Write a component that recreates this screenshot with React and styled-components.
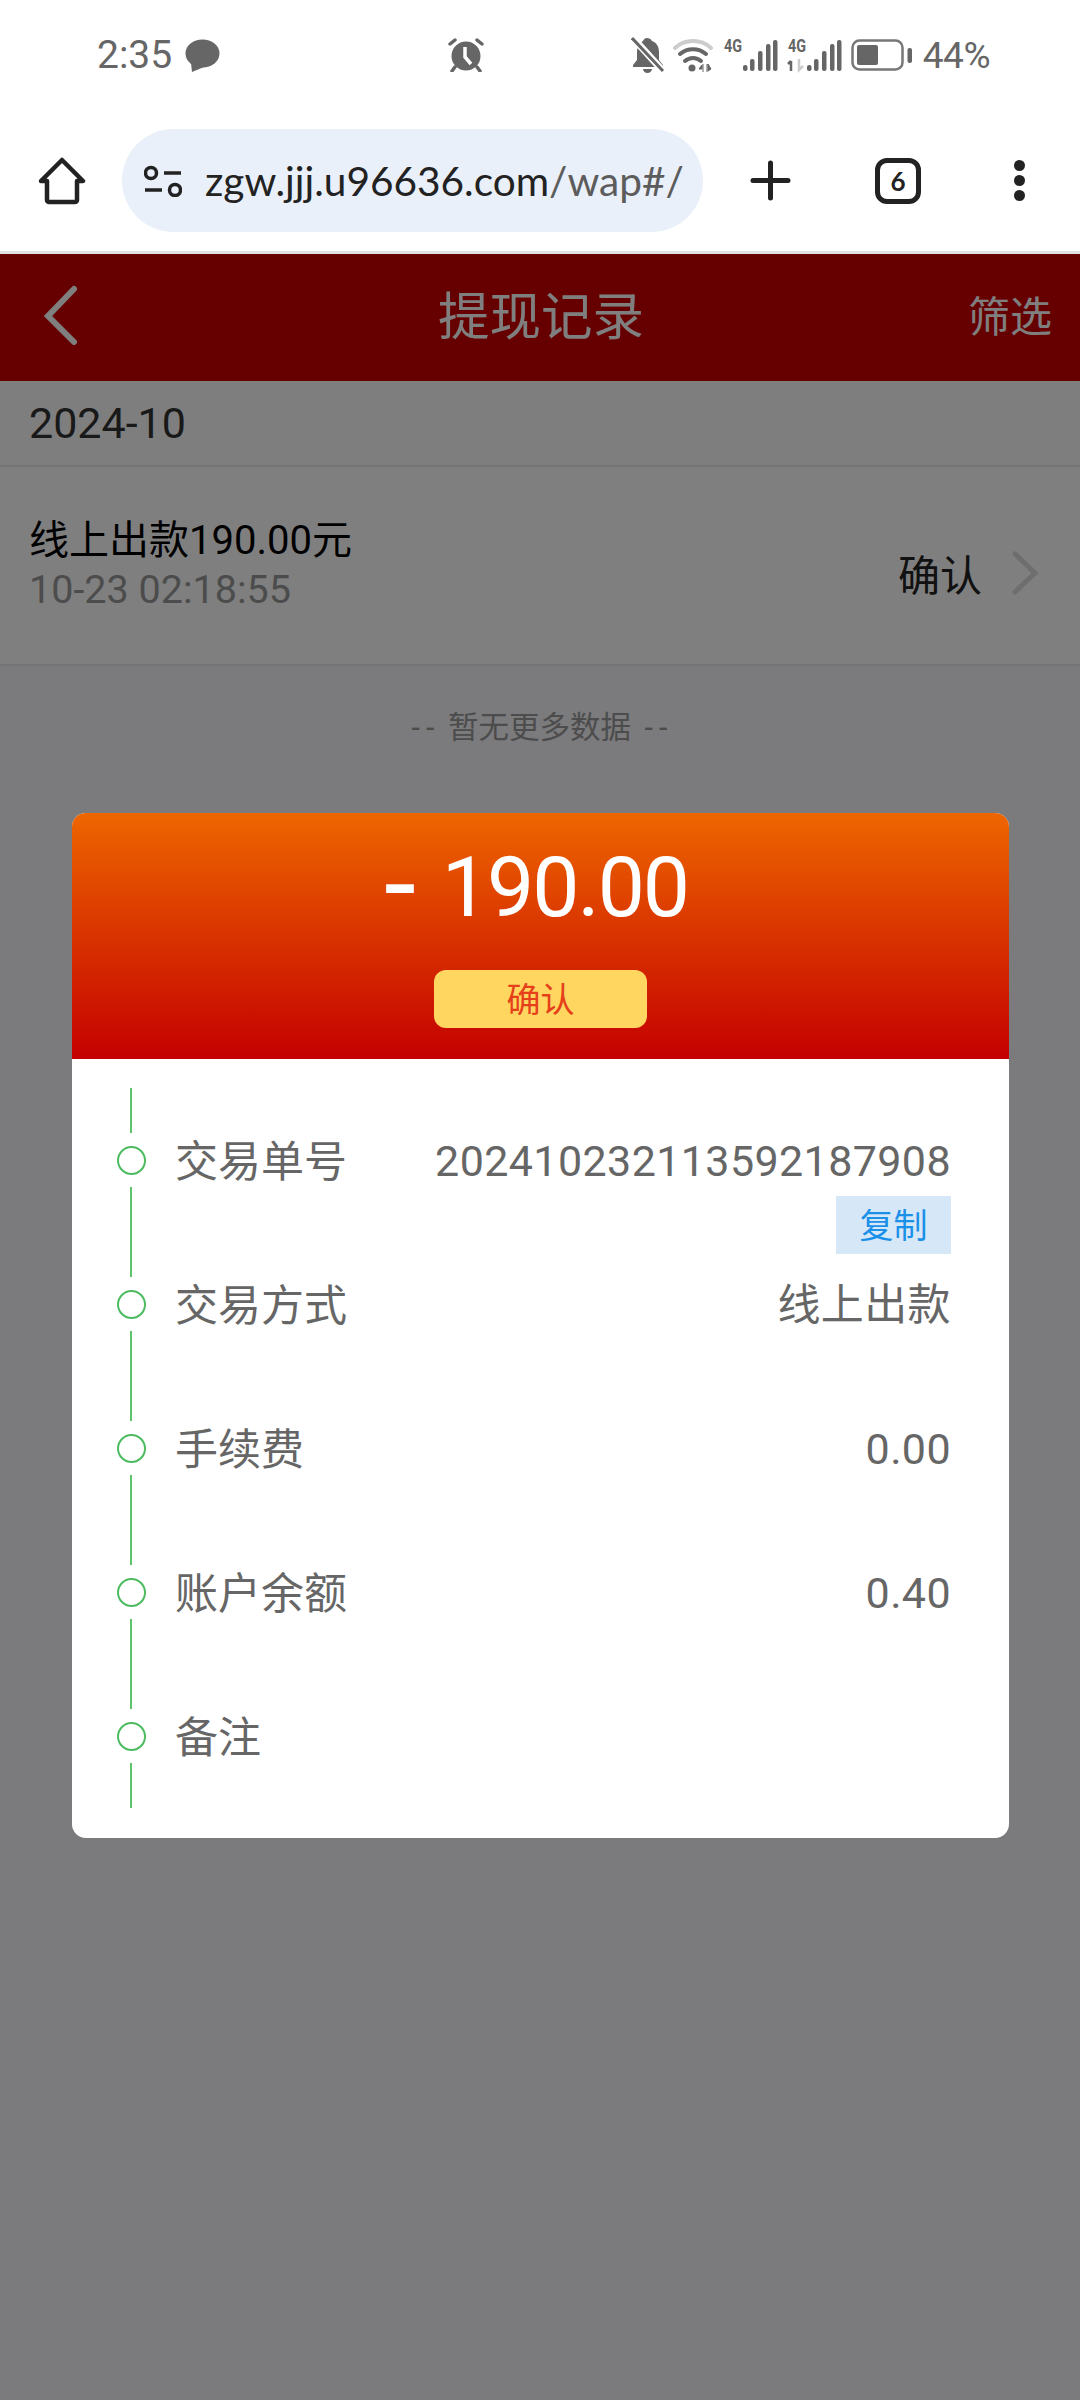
import React from 'react';
import styled, { createGlobalStyle } from 'styled-components';

const Global = createGlobalStyle`
  html, body { margin: 0; padding: 0; background: #fff; }
  * { box-sizing: border-box; }
  body { font-family: Roboto, "Noto Sans CJK SC", sans-serif; }
`;

const Phone = styled.div`
  width: 1080px; height: 2400px; display: flex; flex-direction: column; overflow: hidden;
`;
const StatusBar = styled.div`
  height: 110px; flex: none; display: flex; align-items: center; padding: 0 90px 0 97px;
  color: #666; font-size: 39px; line-height: 1;
`;
const StatusLeft = styled.div`
  width: 351px; flex: none; display: flex; align-items: center; gap: 13px;
`;
const StatusRight = styled.div`
  margin-left: auto; display: flex; align-items: center; gap: 8px;
`;
const Percent = styled.span`font-size: 37px; margin-left: 2px; letter-spacing: -0.5px; color: #666;`;
const Toolbar = styled.div`
  height: 144px; flex: none; display: flex; align-items: center; padding-left: 38px;
  border-bottom: 3px solid #e2e2e2;
`;
const UrlPill = styled.div`
  width: 581px; height: 103px; margin-left: 36px; margin-right: 47px; flex: none;
  display: flex; align-items: center; padding-left: 22px; gap: 23px;
  background: #eaf0f9; border-radius: 52px; overflow: hidden;
`;
const UrlText = styled.div`
  font-family: Lato, sans-serif; font-size: 40.6px; color: #222; white-space: nowrap;
`;
const UrlPath = styled.span`color: #5c5c5c;`;
const TabBox = styled.div`
  width: 46px; height: 46px; margin-left: 84px; margin-right: 93px; border: 5px solid #222; border-radius: 12px;
  flex: none; display: flex; align-items: center; justify-content: center;
  font-family: Lato, sans-serif; font-size: 26px; font-weight: 700; color: #222;
`;
const Dots = styled.div`
  display: flex; flex-direction: column; gap: 4px; flex: none;
  i { display: block; width: 11px; height: 11px; border-radius: 50%; background: #222; }
`;
const WebPage = styled.div`
  position: relative; flex: 1; background: #f6f6fa; display: flex; flex-direction: column;
`;
const Header = styled.header`
  height: 127px; flex: none; position: relative; background: #cc0000; color: #fff;
  display: flex; align-items: center; justify-content: center;
`;
const BackIcon = styled.svg`position: absolute; left: 42px; top: 31px;`;
const Title = styled.h1`margin: 0 0 0 2px; font-size: 51.5px; font-weight: 400; line-height: 1;`;
const FilterLink = styled.span`position: absolute; right: 28px; top: 43px; font-size: 42px; line-height: 1;`;
const MonthRow = styled.div`
  height: 86px; flex: none; display: flex; align-items: center; padding: 0 29px;
  background: #fdfdfd; border-bottom: 2px solid #e8e8e8; color: #333; font-size: 43px;
`;
const RecordRow = styled.div`
  height: 199px; flex: none; display: flex; align-items: center; justify-content: space-between;
  padding: 0 42px 0 29px; background: #fff; border-bottom: 2px solid #e8e8e8;
`;
const RecordInfo = styled.div`display: flex; flex-direction: column; gap: 1px; margin-top: -1px;`;
const RecordTitle = styled.div`font-size: 40px; line-height: 48px; color: #000;`;
const RecordTime = styled.div`font-size: 39.5px; line-height: 48px; color: #999;`;
const RecordStatus = styled.div`
  display: flex; align-items: center; gap: 30px; font-size: 42px; color: #222; margin-top: 14px;
`;
const NoMore = styled.div`
  margin-top: 42px; padding-left: 5px; text-align: center; font-size: 30.5px; line-height: 40px; color: #999;
`;
const Dash = styled.span`
  letter-spacing: 6px;
  &:last-child { margin-left: 6px; }
`;
const Mask = styled.div`position: absolute; inset: 0; background: rgba(0,0,0,.5);`;
const Modal = styled.div`
  position: absolute; left: 72px; top: 559px; width: 937px; background: #fff; border-radius: 14px; overflow: hidden;
`;
const ModalHead = styled.div`
  height: 246px; display: flex; flex-direction: column; align-items: center;
  background: linear-gradient(180deg, #ee6600 0%, #c40000 100%);
`;
const Amount = styled.div`
  margin-top: 25px; padding-right: 9px; font-size: 84px; line-height: 100px; color: #fff; white-space: pre; letter-spacing: -2px;
`;
const Minus = styled.span`font-size: 116px; line-height: 0; vertical-align: -8px; letter-spacing: 7px;`;
const Badge = styled.div`
  margin-top: 32px; width: 213px; height: 58px; border-radius: 12px; background: #ffd660; padding-bottom: 4px;
  display: flex; align-items: center; justify-content: center; font-size: 34px; color: #e5401a;
`;
const ModalBody = styled.div`padding: 29px 58px 30px 45px;`;
const Row = styled.div`display: flex; height: 144px;`;
const Rail = styled.div`
  width: 28px; flex: none; display: flex; flex-direction: column; align-items: center; margin-right: 30px;
`;
const RailLine = styled.div`flex: 1; width: 2px; background: #5cc26c;`;
const RailDot = styled.div`
  width: 29px; height: 29px; flex: none; margin: 13px 0 12px; border: 2px solid #4dbb5f; border-radius: 50%;
`;
const Label = styled.div`font-size: 43px; line-height: 60px; margin-top: 44px; color: #666;`;
const ValueCol = styled.div`
  margin-left: auto; margin-top: 43px; display: flex; flex-direction: column; align-items: flex-end; color: #666;
`;
const Value = styled.div`font-size: 43px; line-height: 60px; flex: none; letter-spacing: 0.4px;`;
const CopyButton = styled.div`
  flex: none; margin-top: 5px; width: 115px; height: 58px; background: #d6e8f8; color: #1a90e8; font-size: 34px; padding-bottom: 4px;
  display: flex; align-items: center; justify-content: center;
`;

const Bubble = () => (
  <svg width="35" height="33" viewBox="0 0 35 33"><ellipse cx="17.5" cy="14.5" rx="17" ry="14" fill="#666"/><path d="M6 24 L7 33 L19 28Z" fill="#666"/></svg>
);
const Alarm = () => (
  <svg width="36" height="34" viewBox="0 0 36 34">
    <circle cx="18" cy="18" r="14.5" fill="#666"/>
    <path d="M17 9v10l6 7" fill="none" stroke="#fff" strokeWidth="3.5"/>
    <path d="M2 6l5-4M34 6l-5-4M7 29l-3 4M29 29l3 4" stroke="#666" strokeWidth="3.5" strokeLinecap="round"/>
  </svg>
);
const MutedBell = () => (
  <svg width="34" height="36" viewBox="0 0 34 36">
    <path d="M16 1c2 0 4 1 5 3 5 2 7 6 7 11v8l4 5v2H2v-2l4-5v-8c0-5 3-9 6-11 1-2 2-3 4-3z" fill="#666"/>
    <path d="M12 32h9a4.5 4 0 0 1-9 0z" fill="#666"/>
    <path d="M2 1l30 33" stroke="#fff" strokeWidth="7"/>
    <path d="M1 1l31 33" stroke="#666" strokeWidth="3"/>
  </svg>
);
const Wifi = () => (
  <svg width="42" height="36" viewBox="0 0 42 36">
    <path d="M2 11a27 27 0 0 1 36 0" fill="none" stroke="#ccc" strokeWidth="4" strokeLinecap="round"/>
    <path d="M7 17a20 20 0 0 1 26 0M12 24a12 12 0 0 1 16 0" fill="none" stroke="#666" strokeWidth="4" strokeLinecap="round"/>
    <circle cx="19" cy="31" r="3.5" fill="#666"/>
    <path d="M29 28l-3 4h3zM30 27v8M34 27v8M35 27l3 5-3 2z" fill="#666" stroke="#666" strokeWidth="1"/>
  </svg>
);
const Signal = ({ second }) => (
  <svg width="56" height="36" viewBox="0 0 56 36" overflow="visible">
    <text x="1" y="15" fontFamily="Roboto, sans-serif" fontSize="19" fontWeight="700" fill="#666" textLength="18" lengthAdjust="spacingAndGlyphs">4G</text>
    {second && <path d="M4 24v10M4 24l-3 3" fill="none" stroke="#666" strokeWidth="2.5"/>}
    {second && <path d="M12 22v11l4-4" fill="none" stroke="#ccc" strokeWidth="2.5"/>}
    {[[20,28,6],[27,22,12],[35,14,20],[43,7,27],[50,3,31]].map(([x,y,h]) => (
      <rect key={x} x={x} y={y} width="4.5" height={h} rx="2" fill="#666"/>
    ))}
  </svg>
);
const Battery = () => (
  <svg width="62" height="32" viewBox="0 0 62 32">
    <rect x="1.5" y="1.5" width="50" height="29" rx="7" fill="none" stroke="#777" strokeWidth="2.5"/>
    <rect x="6" y="6" width="21" height="20" rx="2" fill="#666"/>
    <rect x="56.5" y="9" width="4.5" height="15" rx="2" fill="#666"/>
  </svg>
);
const HomeIcon = () => (
  <svg width="48" height="48" viewBox="0 0 48 48" style={{flex:'none'}}>
    <path d="M24 3 L45 24 H39 V43 a2 2 0 0 1 -2 2 H11 a2 2 0 0 1 -2 -2 V24 H3 Z" fill="none" stroke="#222" strokeWidth="4.5" strokeLinejoin="round"/>
  </svg>
);
const SiteIcon = () => (
  <svg width="38" height="32" viewBox="0 0 38 32" style={{flex:'none'}}>
    <circle cx="7" cy="8" r="5.5" fill="none" stroke="#222" strokeWidth="3.5"/>
    <path d="M20 8h17M1 25h17" stroke="#222" strokeWidth="3.5"/>
    <circle cx="31" cy="25" r="5.5" fill="none" stroke="#222" strokeWidth="3.5"/>
  </svg>
);
const PlusIcon = () => (
  <svg width="41" height="41" viewBox="0 0 41 41" style={{flex:'none'}}>
    <path d="M3 20.5h35M20.5 3v35" stroke="#222" strokeWidth="5" strokeLinecap="round"/>
  </svg>
);

const rows = [
  { label: '交易单号', value: '202410232113592187908', copy: true },
  { label: '交易方式', value: '线上出款' },
  { label: '手续费', value: '0.00' },
  { label: '账户余额', value: '0.40' },
  { label: '备注', value: '' },
];

export default function App() {
  return (
    <Phone>
      <Global />
      <StatusBar>
        <StatusLeft><span>2:35</span><Bubble /></StatusLeft>
        <Alarm />
        <StatusRight>
          <MutedBell /><Wifi /><Signal /><Signal second /><Battery /><Percent>44%</Percent>
        </StatusRight>
      </StatusBar>
      <Toolbar>
        <HomeIcon />
        <UrlPill>
          <SiteIcon />
          <UrlText>zgw.jjj.u96636.com<UrlPath>/wap#/</UrlPath></UrlText>
        </UrlPill>
        <PlusIcon />
        <TabBox>6</TabBox>
        <Dots><i /><i /><i /></Dots>
      </Toolbar>
      <WebPage>
        <Header>
          <BackIcon width="36" height="60" viewBox="0 0 36 60">
            <path d="M32 4 L6 31 L32 57" fill="none" stroke="#fff" strokeWidth="6" strokeLinecap="round"/>
          </BackIcon>
          <Title>提现记录</Title>
          <FilterLink>筛选</FilterLink>
        </Header>
        <MonthRow>2024-10</MonthRow>
        <RecordRow>
          <RecordInfo>
            <RecordTitle>线上出款190.00元</RecordTitle>
            <RecordTime>10-23 02:18:55</RecordTime>
          </RecordInfo>
          <RecordStatus>
            确认
            <svg width="26" height="44" viewBox="0 0 26 44"><path d="M3 3 L23 22 L3 41" fill="none" stroke="#dcdcdc" strokeWidth="5" strokeLinecap="round"/></svg>
          </RecordStatus>
        </RecordRow>
        <NoMore><Dash>--</Dash> 暂无更多数据 <Dash>--</Dash></NoMore>
        <Mask />
        <Modal>
          <ModalHead>
            <Amount><Minus>-</Minus> 190.00</Amount>
            <Badge>确认</Badge>
          </ModalHead>
          <ModalBody>
            {rows.map((r) => (
              <Row key={r.label}>
                <Rail><RailLine /><RailDot /><RailLine /></Rail>
                <Label>{r.label}</Label>
                <ValueCol>
                  <Value>{r.value}</Value>
                  {r.copy && <CopyButton>复制</CopyButton>}
                </ValueCol>
              </Row>
            ))}
          </ModalBody>
        </Modal>
      </WebPage>
    </Phone>
  );
}
